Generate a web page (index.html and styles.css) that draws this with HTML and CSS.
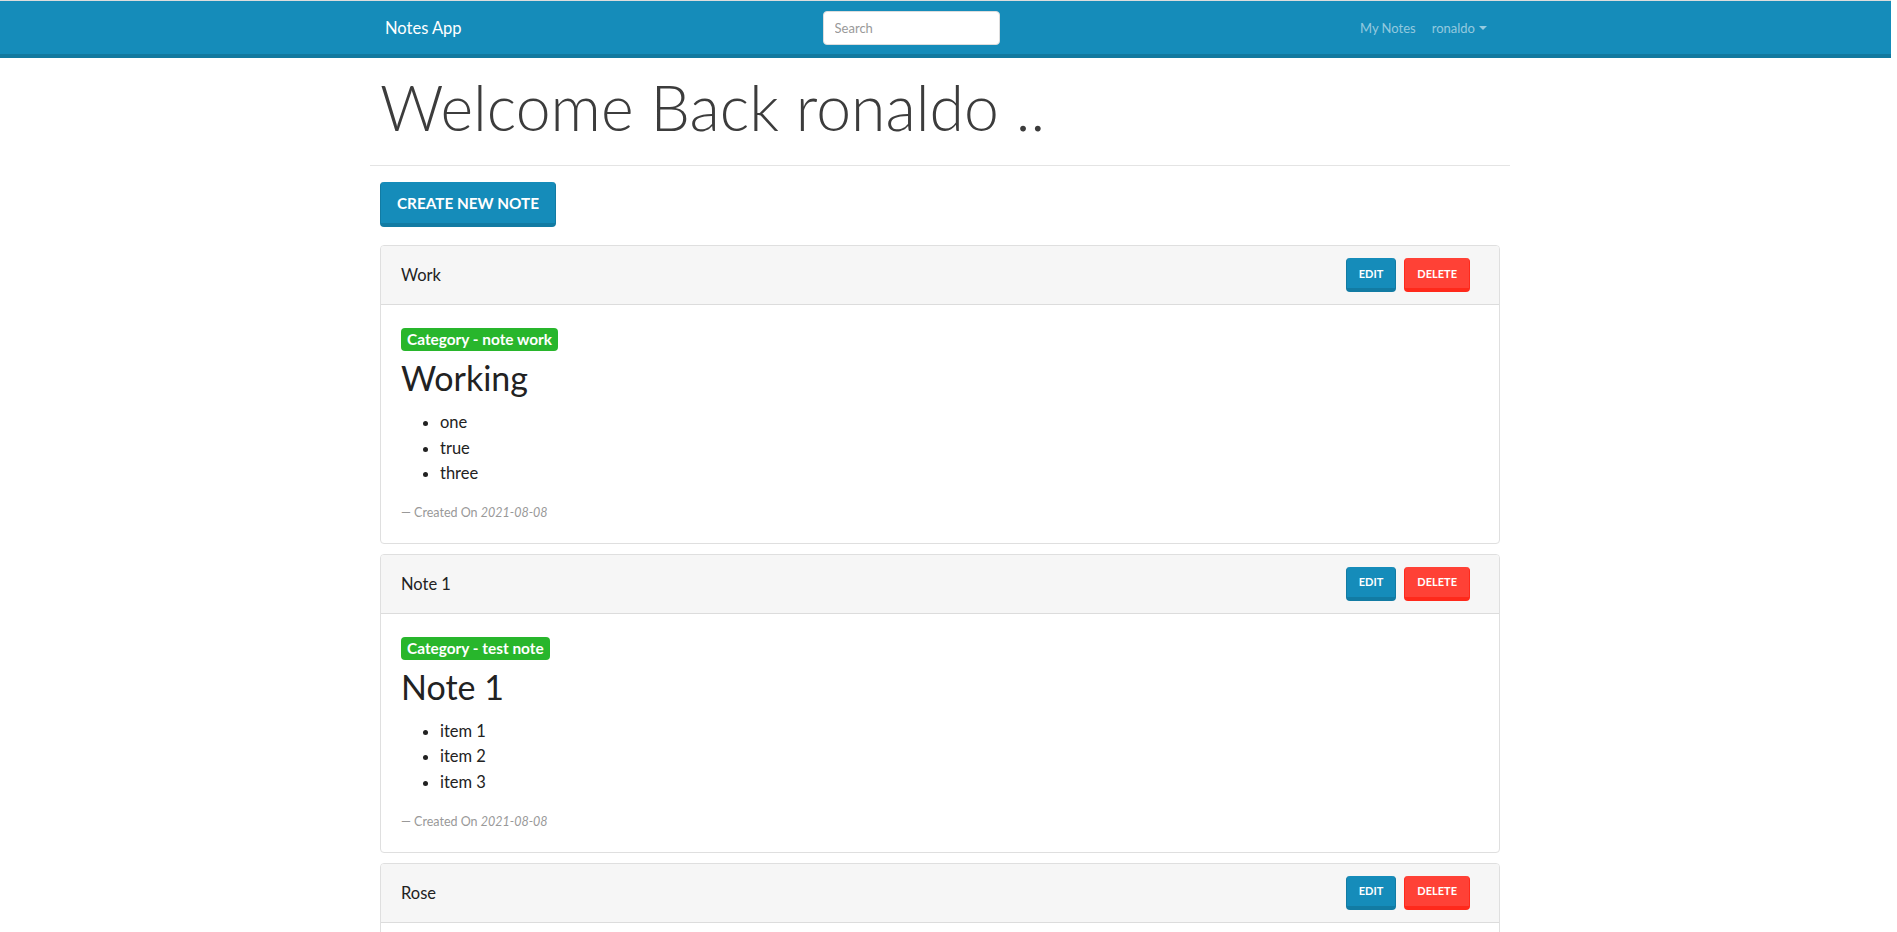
FILE: index.html
```html
<!DOCTYPE html>
<html lang="en">
<head>
<meta charset="utf-8">
<title>Notes App</title>
<link rel="stylesheet" href="styles.css">
</head>
<body>
<nav class="navbar">
  <div class="nav-inner">
    <a class="brand" href="#">Notes App</a>
    <form class="search">
      <input class="search-input" type="text" placeholder="Search">
    </form>
    <ul class="nav-links">
      <li><a class="nav-link" href="#">My Notes</a></li>
      <li><a class="nav-link dropdown" href="#">ronaldo<span class="caret"></span></a></li>
    </ul>
  </div>
</nav>

<main class="container">
  <h1 class="welcome">Welcome Back ronaldo ..</h1>
  <hr class="divider">
  <div class="content">
    <a class="btn btn-primary btn-lg" href="#">Create New Note</a>

    <section class="card">
      <header class="card-header">
        <span class="card-name">Work</span>
        <div class="actions">
          <a class="btn btn-primary btn-sm" href="#">Edit</a>
          <a class="btn btn-danger btn-sm" href="#">Delete</a>
        </div>
      </header>
      <div class="card-body">
        <span class="badge">Category - note work</span>
        <h2 class="note-title">Working</h2>
        <ul class="items">
          <li>one</li>
          <li>true</li>
          <li>three</li>
        </ul>
        <footer class="created">— Created On <cite>2021-08-08</cite></footer>
      </div>
    </section>

    <section class="card">
      <header class="card-header">
        <span class="card-name">Note 1</span>
        <div class="actions">
          <a class="btn btn-primary btn-sm" href="#">Edit</a>
          <a class="btn btn-danger btn-sm" href="#">Delete</a>
        </div>
      </header>
      <div class="card-body">
        <span class="badge">Category - test note</span>
        <h2 class="note-title">Note 1</h2>
        <ul class="items">
          <li>item 1</li>
          <li>item 2</li>
          <li>item 3</li>
        </ul>
        <footer class="created">— Created On <cite>2021-08-08</cite></footer>
      </div>
    </section>

    <section class="card">
      <header class="card-header">
        <span class="card-name">Rose</span>
        <div class="actions">
          <a class="btn btn-primary btn-sm" href="#">Edit</a>
          <a class="btn btn-danger btn-sm" href="#">Delete</a>
        </div>
      </header>
      <div class="card-body card-body-empty"></div>
    </section>
  </div>
</main>
</body>
</html>
```

FILE: styles.css
```css
body {
  margin: 0;
  padding-right: 17px;
  font-family: Lato, "Open Sans", sans-serif;
  font-size: 16.5px;
  color: #222;
  background: #fff;
}

a {
  text-decoration: none;
}

/* ---------- Navbar ---------- */
.navbar {
  margin-right: -11px;
  padding-right: 11px;
  background: #158cba;
  border-top: 1px solid #dcdcdc;
  border-bottom: 4px solid #12799f;
}

.nav-inner {
  max-width: 1140px;
  margin: 0 auto;
  padding: 0 15px;
  box-sizing: border-box;
  height: 53px;
  display: flex;
  align-items: center;
}

.brand {
  color: #fff;
  font-size: 16.5px;
}

.search {
  margin-left: 361px;
  margin-right: auto;
}

.search-input {
  display: block;
  width: 177px;
  height: 34px;
  box-sizing: border-box;
  border: 1px solid #ddd;
  border-radius: 4px;
  padding: 0 11px;
  font-family: Lato, sans-serif;
  font-size: 13px;
  color: #555;
  background: #fff;
}

.search-input::placeholder {
  color: #999;
}

.nav-links {
  list-style: none;
  margin: 0;
  padding: 0;
  display: flex;
}

.nav-link {
  display: flex;
  align-items: center;
  padding: 8px;
  font-size: 13px;
  color: rgba(255, 255, 255, 0.55);
}

.caret {
  display: inline-block;
  margin-left: 4px;
  border-top: 4px solid rgba(255, 255, 255, 0.55);
  border-left: 4px solid transparent;
  border-right: 4px solid transparent;
}

/* ---------- Page ---------- */
.container {
  max-width: 1140px;
  margin: 0 auto;
}

.welcome {
  margin: 12px 0 0;
  padding: 0 10px;
  font-size: 62.5px;
  font-weight: 300;
  line-height: 73px;
  color: #3c3c3c;
}

.divider {
  margin: 22px 0 16px;
  border: 0;
  border-top: 1px solid #e4e4e4;
}

.content {
  padding: 0 10px;
}

/* ---------- Buttons ---------- */
.btn {
  display: inline-flex;
  align-items: center;
  justify-content: center;
  box-sizing: border-box;
  color: #fff;
  font-weight: 700;
  text-transform: uppercase;
  border-radius: 4px;
  border-style: solid;
  border-width: 0 1px 4px 1px;
}

.btn-primary {
  background: #158cba;
  border-color: #127ba3;
}

.btn-danger {
  background: #ff4136;
  border-color: #ff291b;
}

.btn-lg {
  height: 45px;
  padding: 0 16px;
  font-size: 15.3px;
  margin-bottom: 18px;
}

.btn-sm {
  height: 34px;
  padding: 0 12px;
  font-size: 11px;
}

/* ---------- Cards ---------- */
.card {
  border: 1px solid #dfdfdf;
  border-radius: 4px;
  margin-bottom: 10px;
  overflow: hidden;
}

.card-header {
  display: flex;
  align-items: center;
  justify-content: space-between;
  height: 59px;
  box-sizing: border-box;
  padding: 0 29px 0 20px;
  background: #f6f6f6;
  border-bottom: 1px solid #dcdcdc;
}

.card-name {
  font-size: 16.5px;
}

.actions {
  display: flex;
  gap: 8px;
}

.card-body {
  padding: 22px 20px 21px;
}

.card-body-empty {
  height: 60px;
}

.badge {
  display: block;
  width: fit-content;
  padding: 0 6px;
  margin-top: 1px;
  line-height: 23px;
  border-radius: 4px;
  background: #28b62c;
  color: #fff;
  font-size: 15.4px;
  font-weight: 700;
}

.note-title {
  margin: 7px 0 0;
  font-size: 34px;
  font-weight: 400;
  line-height: 40px;
  color: #222;
}

.items {
  margin: 12px 0 0;
  padding-left: 39px;
  line-height: 25.6px;
}

.created {
  margin-top: 16px;
  font-size: 12.5px;
  line-height: 19px;
  color: #999;
}

.created cite {
  font-style: italic;
}
```
